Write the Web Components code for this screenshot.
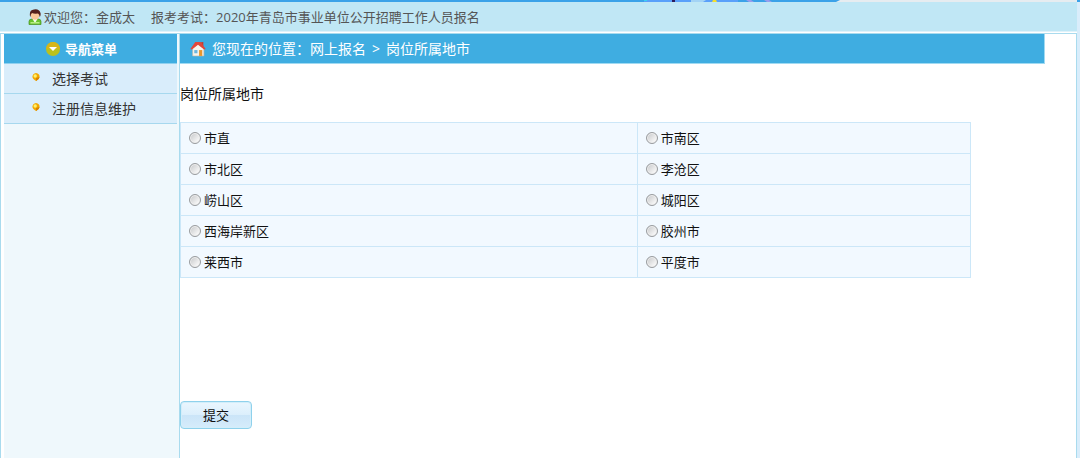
<!DOCTYPE html>
<html lang="zh-CN">
<head>
<meta charset="utf-8">
<title>网上报名</title>
<style>
  html, body { height: 100%; }
  body {
    margin: 0;
    background: #fff;
    color: #111;
    font: 13px/20px "Open Sans", "Noto Sans CJK SC", sans-serif;
  }
</style>
</head>
<body>
<exam-app></exam-app>

<script>
const define = (name, html, setup) => {
  const template = document.createElement('template');
  template.innerHTML = html;
  customElements.define(name, class extends HTMLElement {
    connectedCallback() {
      if (this.shadowRoot) return;
      this.attachShadow({ mode: 'open' }).append(template.content.cloneNode(true));
      if (setup) setup(this, this.shadowRoot);
    }
  });
};

// Bottom edge of the site banner
define('banner-strip', `
  <style>
    :host { display: flex; height: 2px; background: #3ba2e8; }
    svg { display: block; margin-left: auto; width: 440px; height: 2px; }
  </style>
  <svg viewBox="0 0 440 2" aria-hidden="true">
    <path fill="#5aa0fa" d="M4 0h94v2H4z"/>
    <path fill="#38d5f0" d="M4 0h3v1H4z"/>
    <path fill="#2c1c5c" d="M32 0h3v2h-3z"/>
    <path fill="#a3d3f5" d="M51 0h15l-3 2H51z"/>
    <path fill="#f5df2c" d="M73 0h3l1 2h-5z"/>
    <path fill="#9a9dec" d="M106 0h5l3 2h-5zM124 0h5l3 2h-5z"/>
    <path fill="#e6ecf0" d="M200 0h237v2H196z"/>
  </svg>`);

define('welcome-bar', `
  <style>
    :host {
      display: flex; align-items: center; height: 29px; padding-left: 28px;
      margin-right: 3px; color: #555; background: #c0e7f5;
      border-bottom: 1px solid #dff2fa;
    }
    svg { width: 14px; height: 16px; margin-right: 2px; flex: none; }
    ::slotted(:last-child) { margin-left: 16px; }
  </style>
  <svg viewBox="0 0 14 16" aria-hidden="true">
    <path d="M1 15.500v-3Q1 10 4 10h6q3 0 3 2.500v3z" fill="#6ac32e" stroke="#438f1c" stroke-width=".7"/>
    <path d="M4.500 10h5L7 14z" fill="#f6fff0"/>
    <path d="M2.500 13h9v1.500h-9z" fill="#b8ec86"/>
    <ellipse cx="7" cy="6" rx="4.300" ry="4.800" fill="#fac89a"/>
    <path d="M2 7Q1 1 6 .5 11-.5 12.500 4q.5 2-.7 4-.4-3-1.800-3.500Q6 5 4 4 2.500 5 2.500 8z" fill="#54201c"/>
  </svg>
  <slot></slot>`);

define('side-item', `
  <style>
    :host { display: block; border-bottom: 1px solid #a6d8ee; background: #d9edfb; }
    a { display: flex; align-items: center; height: 29px; padding-left: 28px; color: #333;
        font-size: 14px; text-decoration: none; }
    svg { width: 8px; height: 8px; margin: 0 12px 4px 0; }
  </style>
  <a href="#"><svg viewBox="0 0 8 8" aria-hidden="true">
    <path d="M4 0Q7.600.4 7.600 4 7.400 6.500 4 8 .6 6.500.4 4 .6.4 4 0z" fill="#f2a800"/>
    <path d="M4 8Q7.400 6.500 7.600 4L4 5z" fill="#d98200"/>
    <circle cx="3.200" cy="3" r="1.700" fill="#fff06a"/>
  </svg><slot></slot></a>`);

define('side-menu', `
  <style>
    :host { display: block; flex: none; width: 173px; padding-right: 2px; background: #eff8fc;
            border-right: 1px solid #a9dbee; }
    h2 { display: flex; align-items: center; height: 29px; margin: 0; padding-left: 42px;
         font-size: 13px; color: #fff; background: #3fade1; border-bottom: 1px solid #8fd0ef; }
    svg { width: 14px; height: 14px; margin-right: 5px; }
  </style>
  <h2><svg viewBox="0 0 14 14" aria-hidden="true">
    <circle cx="7" cy="7" r="7" fill="#bcc11c"/>
    <path d="M0 7a7 7 0 0 1 14 0z" fill="#d6b51a"/>
    <path d="M3 5h8L7 9z" fill="#fff"/>
  </svg>导航菜单</h2>
  <nav>
    <side-item>选择考试</side-item>
    <side-item>注册信息维护</side-item>
  </nav>`);

define('crumb-bar', `
  <style>
    :host { display: flex; align-items: center; height: 30px; width: 96.500%; box-sizing: border-box;
            padding-left: 10px; gap: 6px; color: #fff; font-size: 14px; background: #3fade1;
            border: solid #a0daf2; border-width: 0 1px 1px 0; }
    svg { width: 16px; height: 16px; flex: none; }
  </style>
  <svg viewBox="0 0 15 15" aria-hidden="true">
    <path d="M2.500 7 7.500 2.500 13 7v7H2.500z" fill="#f7f4ec" stroke="#c5b9a8" stroke-width=".6"/>
    <path d="M10.500 1h2v4h-2z" fill="#c93b2c"/>
    <path d="M.3 7.500 5 1h5l4.700 6.500-1.500.5L7.500 3.500 1.800 8z" fill="#e2463a"/>
    <path d="M4 8.500h3v3H4z" fill="#6bb6de"/>
    <path d="M8.500 8.500h3V14h-3z" fill="#e8962c"/>
  </svg>
  <slot></slot>`);

define('city-table', `
  <style>
    :host { display: block; width: 88.300%; }
    table { width: 100%; table-layout: fixed; border-collapse: collapse; background: #f2f9ff; }
    col:first-child { width: 57.800%; }
    td { height: 30px; padding: 0 0 0 8px; border: 1px solid #cce7f8; }
    label { display: flex; align-items: center; gap: 3px; }
    input { appearance: none; box-sizing: border-box; width: 12px; height: 12px; margin: 0; flex: none;
            border: 1px solid #999c9f; border-radius: 50%;
            background: linear-gradient(135deg, #c3c5c7, #f4f4f4 75%);
            box-shadow: inset 0 0 0 1px #efefef; }
    input:checked { background: radial-gradient(#2675a8 35%, #eee 45%); }
  </style>
  <table><colgroup><col><col></colgroup><tbody></tbody></table>`,
  (host, root) => {
    const names = host.getAttribute('cities').split(' ');
    const body = root.querySelector('tbody');
    let row;
    names.forEach((name, i) => {
      if (i % 2 === 0) row = body.insertRow();
      const label = document.createElement('label');
      const input = document.createElement('input');
      input.type = 'radio';
      input.name = 'city';
      input.value = name;
      label.append(input, name);
      row.insertCell().append(label);
    });
  });

define('submit-button', `
  <style>
    :host { display: block; }
    button { display: block; width: 72px; height: 28px; padding: 0; font: inherit; color: #111;
             border: 1px solid #8fd1ec; border-radius: 4px;
             background: linear-gradient(#eaf6fe, #dceffc 48%, #cbe5f8 52%, #d6ecfb);
             box-shadow: inset 0 0 0 1px #d3eefa; }
  </style>
  <button type="submit"><slot></slot></button>`);

define('exam-app', `
  <style>
    :host { display: flex; flex-direction: column; min-height: 100%; background: #d9edfb; }
    .gap { height: 1px; margin-right: 3px; background: #fff; }
    .body { flex: 1; display: flex; margin-right: 3px; padding-left: 3px; background: #fff;
            border: solid #a9dbee; border-width: 1px 1px 0; }
    main { flex: 1; min-width: 0; }
    h1 { margin: 20px 0 18px; font-size: 14px; line-height: 20px; font-weight: 400; }
    submit-button { margin-top: 123px; }
  </style>
  <banner-strip></banner-strip>
  <welcome-bar><span>欢迎您：金成太</span><span>报考考试：2020年青岛市事业单位公开招聘工作人员报名</span></welcome-bar>
  <div class="gap"></div>
  <div class="body">
    <side-menu></side-menu>
    <main>
      <crumb-bar><span>您现在的位置：网上报名</span><span>&gt;</span><span>岗位所属地市</span></crumb-bar>
      <h1>岗位所属地市</h1>
      <city-table cities="市直 市南区 市北区 李沧区 崂山区 城阳区 西海岸新区 胶州市 莱西市 平度市"></city-table>
      <submit-button>提交</submit-button>
    </main>
  </div>`);
</script>
</body>
</html>
